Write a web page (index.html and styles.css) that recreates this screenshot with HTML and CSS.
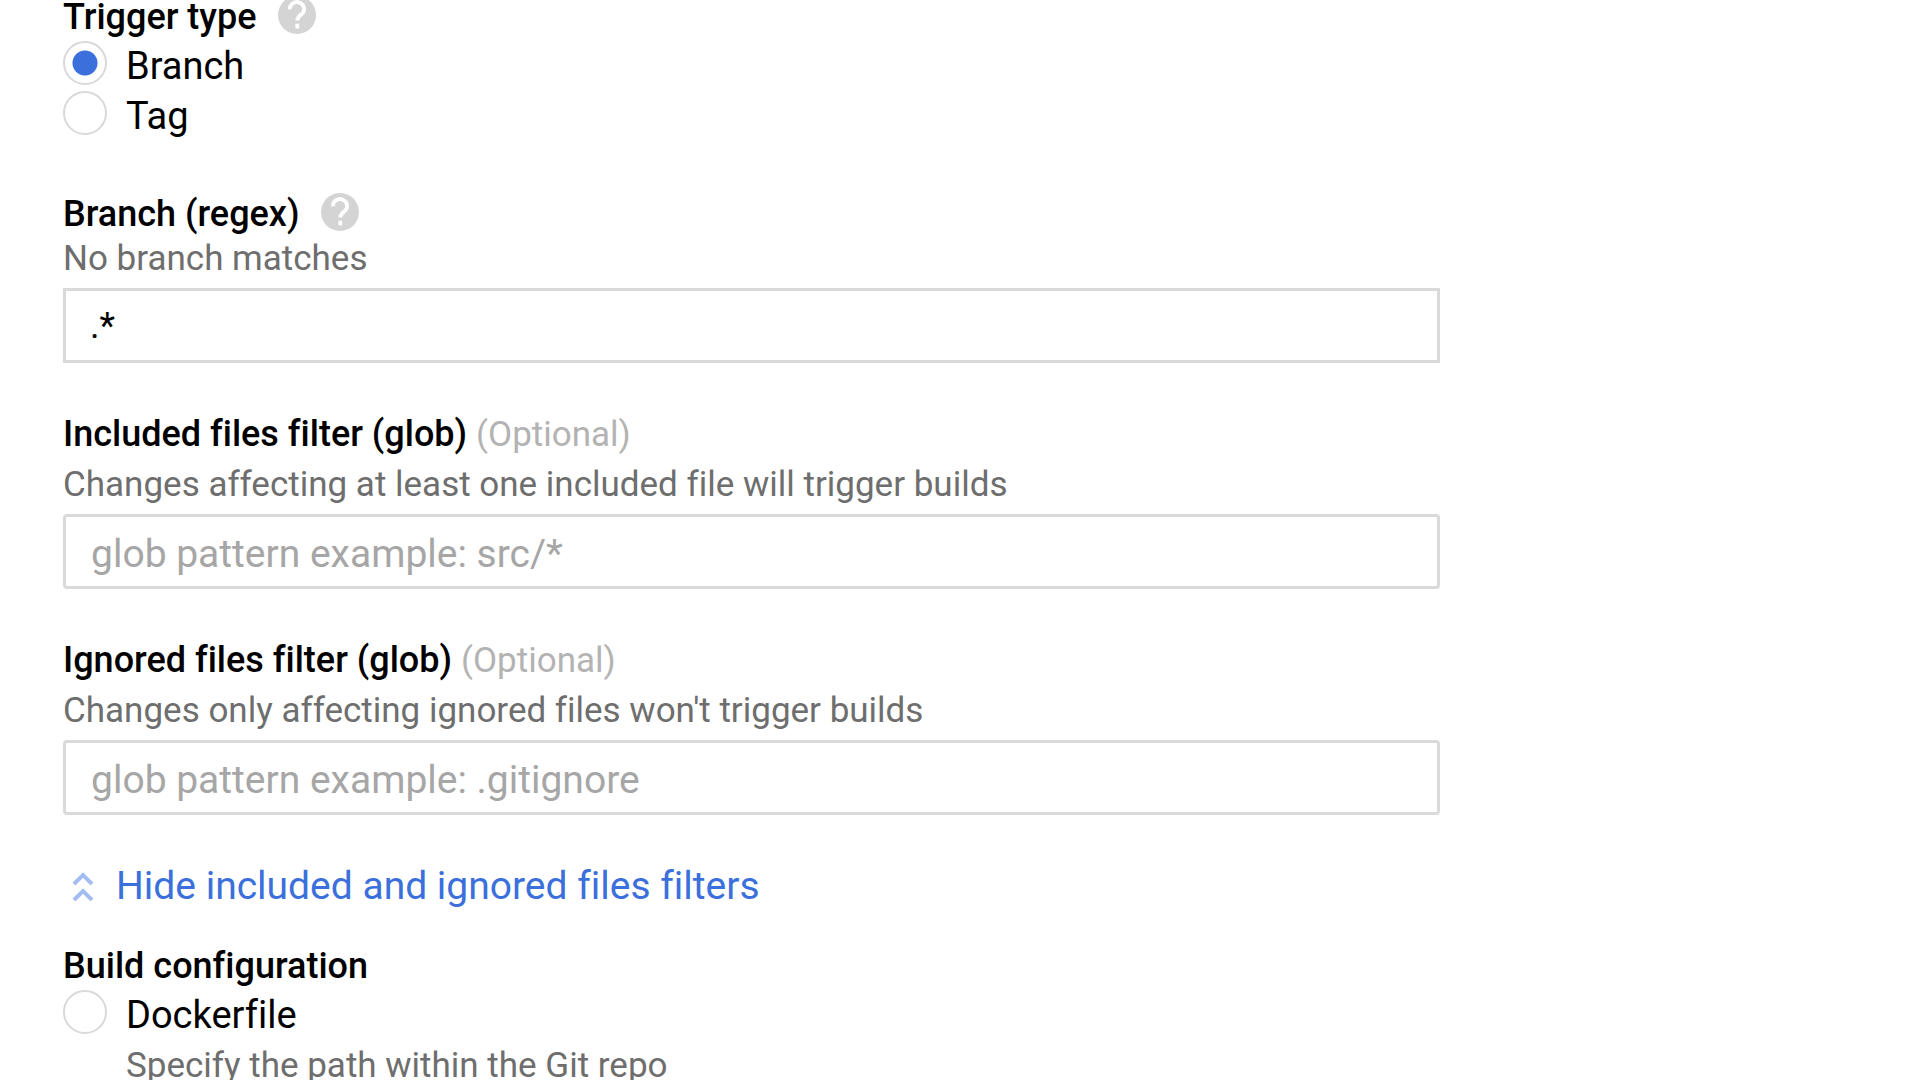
FILE: index.html
```
<!DOCTYPE html>
<html lang="en">
<head>
  <meta charset="UTF-8">
  <title>Edit trigger</title>
  <link rel="stylesheet" href="styles.css">
</head>
<body>

  <form class="trigger-form">

    <!-- Trigger type -->
    <div class="group" role="radiogroup" aria-labelledby="type-title">
      <div class="title">
        <span id="type-title">Trigger type</span>
        <svg class="help" viewBox="0 0 24 24" role="img" aria-label="Help">
          <circle cx="12" cy="12" r="12"/>
          <path d="M7.500 8.500a4.500 4.300 0 1 1 7.300 3c-1.600 1.300-2.600 2-2.600 4"/>
          <path d="M12.200 17.500v3"/>
        </svg>
      </div>
      <label class="option">
        <input type="radio" name="type" value="branch" checked>
        <span>Branch</span>
      </label>
      <label class="option">
        <input type="radio" name="type" value="tag">
        <span>Tag</span>
      </label>
    </div>

    <!-- Branch -->
    <div class="group branch">
      <div class="title">
        <label for="branch">Branch (regex)</label>
        <svg class="help" viewBox="0 0 24 24" role="img" aria-label="Help">
          <circle cx="12" cy="12" r="12"/>
          <path d="M7.500 8.500a4.500 4.300 0 1 1 7.300 3c-1.600 1.300-2.600 2-2.600 4"/>
          <path d="M12.200 17.500v3"/>
        </svg>
      </div>
      <p class="hint">No branch matches</p>
      <input class="field square" type="text" id="branch" value=".*">
    </div>

    <!-- File filters -->
    <div class="group filter">
      <div class="title">
        <label for="included">Included files filter (glob) <span class="optional">(Optional)</span></label>
      </div>
      <p class="hint">Changes affecting at least one included file will trigger builds</p>
      <input class="field" type="text" id="included" placeholder="glob pattern example: src/*">
    </div>

    <div class="group filter">
      <div class="title">
        <label for="ignored">Ignored files filter (glob) <span class="optional">(Optional)</span></label>
      </div>
      <p class="hint">Changes only affecting ignored files won't trigger builds</p>
      <input class="field" type="text" id="ignored" placeholder="glob pattern example: .gitignore">
    </div>

    <a class="toggle" href="#">
      <svg class="chevrons" viewBox="0 0 22 30" aria-hidden="true">
        <path d="M2 13l9-9 9 9M2 29l9-9 9 9"/>
      </svg>
      Hide included and ignored files filters
    </a>

    <!-- Build configuration -->
    <div class="group filter" role="radiogroup" aria-labelledby="build-title">
      <div class="title"><span id="build-title">Build configuration</span></div>
      <label class="option">
        <input type="radio" name="build" value="dockerfile">
        <span>Dockerfile</span>
      </label>
      <p class="hint indent">Specify the path within the Git repo</p>
    </div>

  </form>

</body>
</html>
```
FILE: styles.css
```
html {
  overflow: hidden;
}
body {
  margin: 0;
  font-family: Roboto, Arial, sans-serif;
  font-size: 35px;
  font-variant-ligatures: none;
  line-height: 42px;
  color: #000;
  background-color: #fff;
}
.trigger-form {
  max-width: 1377px;
  margin-top: -4px; /* first title sits against the top edge */
  padding: 0 63px;
}
.title {
  display: flex;
  align-items: center;
  gap: 21px;
  font-size: 36px;
  font-weight: 500;
}
.optional {
  font-size: 35px;
  font-weight: 400;
  color: #b3b3b3;
}
.help {
  width: 38px;
  height: 38px;
  margin-top: -4px;
  fill: #d4d4d4;
}
.help path {
  fill: none;
  stroke: #fff;
  stroke-width: 2.4;
}
.option {
  display: flex;
  align-items: center;
  gap: 19px;
  height: 50px;
  font-size: 38px;
}
.option span {
  padding-top: 5px;
}
.option input {
  appearance: none;
  width: 44px;
  height: 44px;
  margin: 0;
  border: 2px solid #d9d9d9;
  border-radius: 50%;
}
.option input:checked {
  background: radial-gradient(circle, #3b70dc 12px, transparent 13px);
}
.hint {
  margin: 0;
  color: #6e6e6e;
}
.filter .hint {
  margin-top: 8px;
}
.hint.indent {
  padding-left: 63px;
}
.field {
  display: block;
  box-sizing: border-box;
  width: 100%;
  height: 75px;
  margin-top: 8px;
  padding: 4px 25px 0;
  border: 3px solid #dadada;
  border-radius: 4px;
  font: inherit;
  font-size: 39px;
  color: #000;
}
.field.square {
  padding: 0 24px;
  border-radius: 0;
  font-size: 36px;
}
.field::placeholder {
  color: #a6a6a6;
  opacity: 1;
}
.branch {
  margin-top: 55px;
}
.branch .hint {
  margin-top: 3px;
}
.branch + .filter,
.filter + .filter {
  margin-top: 50px;
}
.toggle {
  display: flex;
  align-items: center;
  gap: 22px;
  margin: 50px 0 38px;
  padding-left: 9px;
  font-size: 39px;
  color: #3b70dc;
  text-decoration: none;
}
.chevrons {
  width: 22px;
  height: 30px;
  fill: none;
  stroke: #a3bdf2;
  stroke-width: 4;
}
```
